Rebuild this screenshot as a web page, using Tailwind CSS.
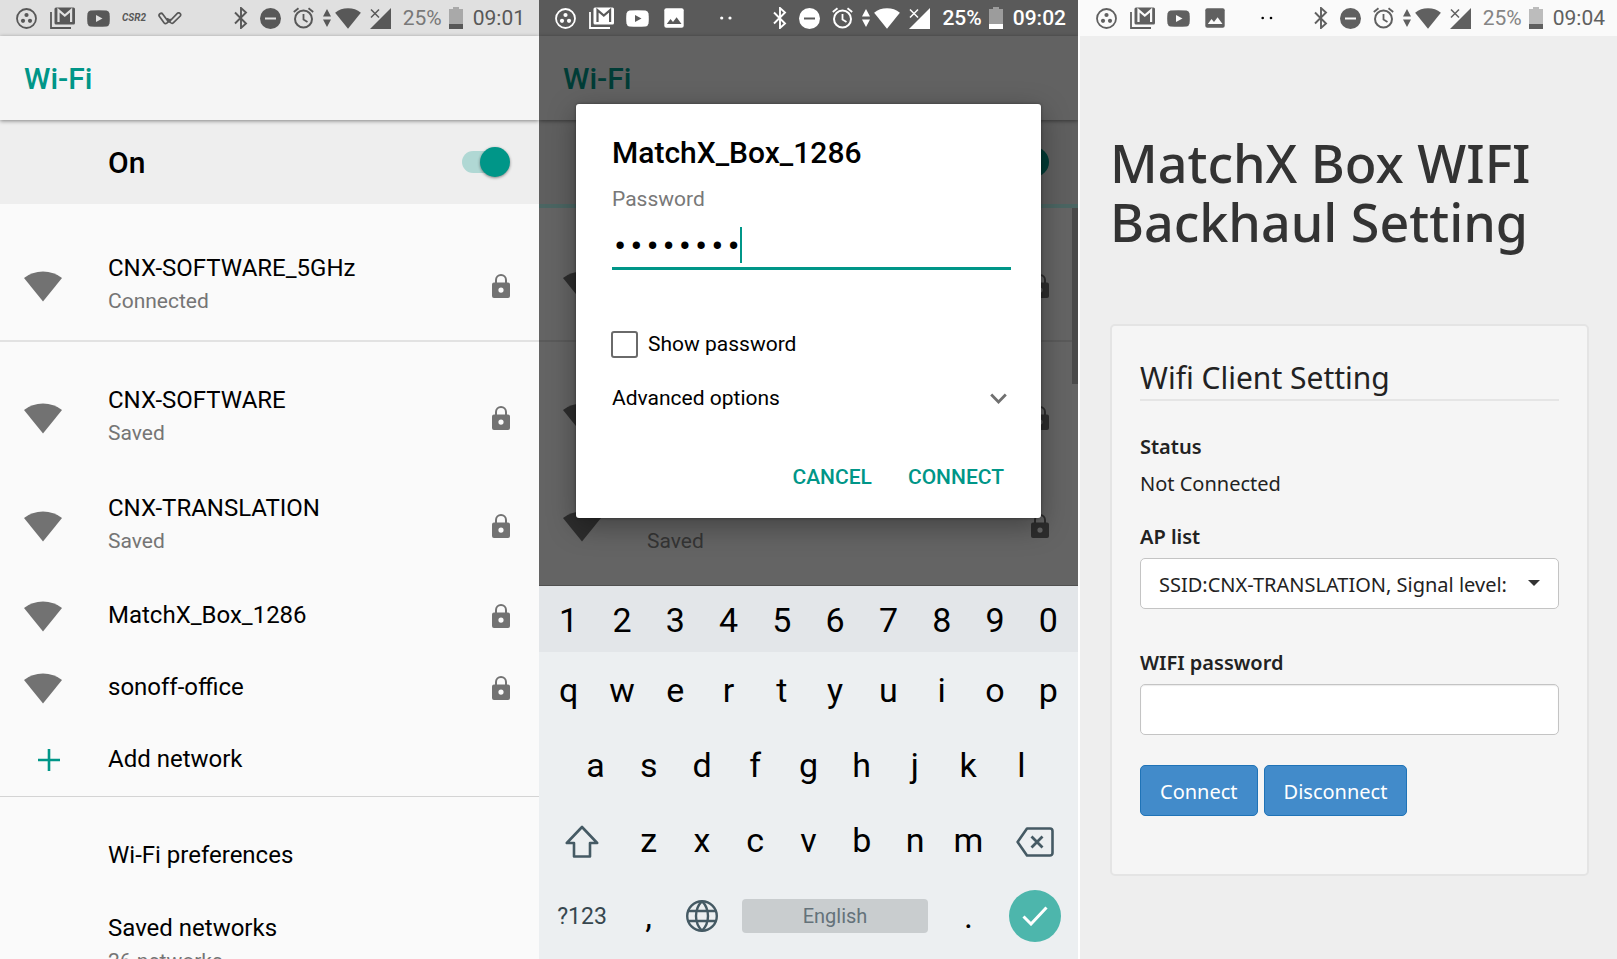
<!DOCTYPE html>
<html lang="en">
<head>
<meta charset="utf-8">
<meta name="viewport" content="width=device-width, initial-scale=1">
<title>Wi-Fi setup</title>
<script src="https://cdn.jsdelivr.net/npm/@tailwindcss/browser@4"></script>
</head>
<body class="bg-white font-[Roboto,sans-serif] text-black">

<svg class="hidden" aria-hidden="true">
  <symbol id="dots3" viewBox="0 0 21 21"><circle cx="10.500" cy="10.500" r="9.500" fill="none" stroke="currentColor" stroke-width="1.800"/><circle cx="10.500" cy="7" r="2.100" fill="currentColor"/><circle cx="7" cy="12.800" r="2.100" fill="currentColor"/><circle cx="14" cy="12.800" r="2.100" fill="currentColor"/></symbol>
  <symbol id="mail" viewBox="0 0 25 22"><path d="M1 5v16h20" fill="none" stroke="currentColor" stroke-width="1.800"/><rect x="4.500" y="0.500" width="20.500" height="17" rx="1.500" fill="currentColor"/><path d="M8.500 15V3.200l6.300 5.300 6.300-5.300V15" fill="none" stroke="var(--bar)" stroke-width="2.200"/></symbol>
  <symbol id="video" viewBox="0 0 23 17"><path d="M3.500.6Q11.500 0 19.500.6 22 .9 22.500 3.500q.6 5 0 10-.5 2.600-3 2.900-8 .6-16 0-2.500-.3-3-2.900-.6-5 0-10Q1 .9 3.500.6z" fill="currentColor"/><path d="M9 5v7l6.500-3.500z" fill="var(--bar)"/></symbol>
  <symbol id="picture" viewBox="0 0 20 20"><rect x="0.300" y="0.300" width="19.400" height="19.400" rx="2" fill="currentColor"/><path d="M2.800 16l3.700-5 2.500 3 3.600-4.700 4.900 6.700z" fill="var(--bar)"/></symbol>
  <symbol id="ticks" viewBox="0 0 24 13"><path d="M9.500 8.500L4.800 2.200a2 2 0 0 0-3.300 2.400L6 10.800q1.300 1.500 2.800.3L12 7.500M9.800 6.800L12.500 10.500q1.500 1.500 3 .2L22.300 4a2 2 0 0 0-3-2.600L11 10" fill="none" stroke="currentColor" stroke-width="1.700" stroke-linejoin="round" stroke-linecap="round"/></symbol>
  <symbol id="bt" viewBox="0 0 14 22"><path d="M1 5.500l11 11L7 21V1l5 4.500-11 11" fill="none" stroke="currentColor" stroke-width="1.900"/></symbol>
  <symbol id="dnd" viewBox="0 0 21 21"><circle cx="10.500" cy="10.500" r="10.500" fill="currentColor"/><path d="M5 10.500h11" stroke="var(--bar)" stroke-width="2"/></symbol>
  <symbol id="alarm" viewBox="0 0 21 22"><circle cx="10.500" cy="12" r="8.500" fill="none" stroke="currentColor" stroke-width="2"/><path d="M10.500 7v5.500l4 2.500M.8 5L5.500 1.200M20.200 5l-4.700-3.800" fill="none" stroke="currentColor" stroke-width="1.800"/></symbol>
  <symbol id="updown" viewBox="0 0 8 18"><path d="M4 0l4 7.500H0zM4 18l4-7.500H0z" fill="currentColor"/></symbol>
  <symbol id="wifi" viewBox="0 0 38 31"><path d="M0 7Q8 .5 19 .5T38 7L19 30.500z" fill="currentColor"/></symbol>
  <symbol id="cell" viewBox="0 0 21 21"><path d="M21 0v21H0z" fill="currentColor"/><path d="M1 1.500l8 8M9 1.500l-8 8" stroke="currentColor" stroke-width="1.500"/></symbol>
  <symbol id="battery" viewBox="0 0 14 22"><path d="M4 0h6v2h4v20H0V2h4z" fill="currentColor" opacity=".4"/><path d="M0 17h14v5H0z" fill="currentColor"/></symbol>
  <symbol id="lock" viewBox="0 0 18 25"><path d="M4 10V6a5 5 0 0 1 10 0v4" fill="none" stroke="currentColor" stroke-width="2"/><path fill-rule="evenodd" d="M2 8.500h14a2 2 0 0 1 2 2V22a2 2 0 0 1-2 2H2a2 2 0 0 1-2-2V10.500a2 2 0 0 1 2-2zM9 13.500a2.600 2.600 0 1 0 0 5.200 2.600 2.600 0 0 0 0-5.200z" fill="currentColor"/></symbol>
</svg>

<main class="grid h-screen grid-cols-3 overflow-hidden">

  <!-- Network list -->
  <section class="flex min-w-0 flex-col overflow-hidden bg-[#fafafa]">
    <div class="flex h-9 shrink-0 items-center justify-between bg-[#e0e0e0] pr-[14px] pl-4 text-[#585858] [--bar:#e0e0e0]">
      <div class="flex items-center">
        <svg class="size-[21px]"><use href="#dots3"/></svg>
        <svg class="ml-[13px] h-[22px] w-[25px]"><use href="#mail"/></svg>
        <svg class="ml-3 h-[17px] w-[23px]"><use href="#video"/></svg>
        <span class="ml-3 text-[10px] leading-none font-bold italic">CSR2</span>
        <svg class="ml-3 h-[13px] w-6"><use href="#ticks"/></svg>
      </div>
      <div class="flex items-center text-[21px] leading-none">
        <svg class="h-[22px] w-[14px]"><use href="#bt"/></svg>
        <svg class="ml-3 size-[21px]"><use href="#dnd"/></svg>
        <svg class="ml-3 h-[22px] w-[21px]"><use href="#alarm"/></svg>
        <svg class="ml-[9px] h-[18px] w-2"><use href="#updown"/></svg>
        <svg class="ml-1 h-[21px] w-[26px]"><use href="#wifi"/></svg>
        <svg class="ml-[9px] size-[21px]"><use href="#cell"/></svg>
        <span class="ml-3 pt-px text-[#787878]">25%</span>
        <svg class="ml-[7px] h-[22px] w-[14px]"><use href="#battery"/></svg>
        <span class="ml-[10px] pt-px">09:01</span>
      </div>
    </div>
    <header class="z-10 flex h-[84px] shrink-0 items-center bg-[#f5f5f5] px-6 pt-0.5 shadow-[0_1px_4px_rgba(0,0,0,0.45)]">
      <h1 class="text-[30px] leading-9 font-medium text-[#009688]">Wi-Fi</h1>
    </header>
    <div class="flex h-[84px] shrink-0 items-center justify-between bg-[#eeeeee] pr-[29px] pl-[108px]">
      <label for="wifi-on" class="pt-0.5 text-[30px] leading-9 font-medium">On</label>
      <span class="relative block h-[30px] w-12">
        <input id="wifi-on" type="checkbox" role="switch" checked class="absolute top-1 left-0 h-[22px] w-[41px] appearance-none rounded-full bg-[#b0d8d4]">
        <span class="pointer-events-none absolute top-0 right-0 size-[30px] rounded-full bg-[#009688] shadow-[0_1px_3px_rgba(0,0,0,0.45)]"></span>
      </span>
    </div>
    <ul class="pt-7">
      <li class="flex h-[108px] items-center pr-[29px] pl-6">
        <svg class="h-[31px] w-[38px] text-[#727272]"><use href="#wifi"/></svg>
        <div class="ml-[46px] flex-1 pb-[3px]"><p class="text-[24px] leading-7">CNX-SOFTWARE_5GHz</p><p class="mt-[5px] text-[21px] leading-7 text-[#757575]">Connected</p></div>
        <svg class="h-[25px] w-[18px] text-[#727272]"><use href="#lock"/></svg>
      </li>
    </ul>
    <ul class="border-t-2 border-[#e2e2e2] pt-[22px]">
      <li class="flex h-[108px] items-center pr-[29px] pl-6">
        <svg class="h-[31px] w-[38px] text-[#727272]"><use href="#wifi"/></svg>
        <div class="ml-[46px] flex-1 pb-[3px]"><p class="text-[24px] leading-7">CNX-SOFTWARE</p><p class="mt-[5px] text-[21px] leading-7 text-[#757575]">Saved</p></div>
        <svg class="h-[25px] w-[18px] text-[#727272]"><use href="#lock"/></svg>
      </li>
      <li class="flex h-[108px] items-center pr-[29px] pl-6">
        <svg class="h-[31px] w-[38px] text-[#727272]"><use href="#wifi"/></svg>
        <div class="ml-[46px] flex-1 pb-[3px]"><p class="text-[24px] leading-7">CNX-TRANSLATION</p><p class="mt-[5px] text-[21px] leading-7 text-[#757575]">Saved</p></div>
        <svg class="h-[25px] w-[18px] text-[#727272]"><use href="#lock"/></svg>
      </li>
      <li class="flex h-[72px] items-center pr-[29px] pl-6">
        <svg class="h-[31px] w-[38px] text-[#727272]"><use href="#wifi"/></svg>
        <p class="ml-[46px] flex-1 pb-0.5 text-[24px] leading-7">MatchX_Box_1286</p>
        <svg class="h-[25px] w-[18px] text-[#727272]"><use href="#lock"/></svg>
      </li>
      <li class="flex h-[72px] items-center pr-[29px] pl-6">
        <svg class="h-[31px] w-[38px] text-[#727272]"><use href="#wifi"/></svg>
        <p class="ml-[46px] flex-1 pb-0.5 text-[24px] leading-7">sonoff-office</p>
        <svg class="h-[25px] w-[18px] text-[#727272]"><use href="#lock"/></svg>
      </li>
      <li class="h-[72px]">
        <button type="button" class="flex h-full w-full items-center pl-[38px] text-left">
          <svg class="size-[22px]" viewBox="0 0 22 22"><path d="M11 0v22M0 11h22" stroke="#009688" stroke-width="2.600"/></svg>
          <span class="ml-12 pb-0.5 text-[24px] leading-7">Add network</span>
        </button>
      </li>
    </ul>
    <ul class="border-t border-[#d4d4d4] pt-[23px]">
      <li class="flex h-[72px] items-center pl-[108px]"><p class="pb-0.5 text-[24px] leading-7">Wi-Fi preferences</p></li>
      <li class="flex h-[108px] items-center pl-[108px]"><div class="pb-[3px]"><p class="text-[24px] leading-7">Saved networks</p><p class="mt-[5px] text-[21px] leading-7 text-[#757575]">26 networks</p></div></li>
    </ul>
  </section>

  <!-- Password dialog over the dimmed list -->
  <section class="flex min-w-0 flex-col overflow-hidden">
    <div class="relative flex min-h-0 flex-1 flex-col overflow-hidden border-b border-[#505050] bg-[#646464]">
      <div class="flex h-9 shrink-0 items-center justify-between bg-[#5a5a5a] pr-3 pl-4 text-white [--bar:#5a5a5a]">
        <div class="flex items-center">
          <svg class="size-[21px]"><use href="#dots3"/></svg>
          <svg class="ml-[13px] h-[22px] w-[25px]"><use href="#mail"/></svg>
          <svg class="ml-3 h-[17px] w-[23px]"><use href="#video"/></svg>
          <svg class="ml-[15px] size-5"><use href="#picture"/></svg>
          <svg class="ml-[36px] h-1 w-3" viewBox="0 0 12 4"><circle cx="1.700" cy="2" r="1.600" fill="currentColor"/><circle cx="10" cy="2" r="1.600" fill="currentColor"/></svg>
        </div>
        <div class="flex items-center text-[21px] leading-none font-medium">
          <svg class="h-[22px] w-[14px]"><use href="#bt"/></svg>
          <svg class="ml-3 size-[21px]"><use href="#dnd"/></svg>
          <svg class="ml-3 h-[22px] w-[21px]"><use href="#alarm"/></svg>
          <svg class="ml-[9px] h-[18px] w-2"><use href="#updown"/></svg>
          <svg class="ml-1 h-[21px] w-[26px]"><use href="#wifi"/></svg>
          <svg class="ml-[9px] size-[21px]"><use href="#cell"/></svg>
          <span class="ml-3 pt-px">25%</span>
          <svg class="ml-[7px] h-[22px] w-[14px]"><use href="#battery"/></svg>
          <span class="ml-[10px] pt-px">09:02</span>
        </div>
      </div>
      <div class="z-10 flex h-[84px] shrink-0 items-center bg-[#626262] px-6 pt-0.5 shadow-[0_1px_4px_rgba(0,0,0,0.45)]">
        <h2 class="text-[30px] leading-9 font-medium text-[#003c36]">Wi-Fi</h2>
      </div>
      <div class="flex h-[84px] shrink-0 items-center justify-end bg-[#5f5f5f] pr-[29px]">
        <span class="size-[30px] rounded-full bg-[#003c36]"></span>
      </div>
      <div class="h-1 shrink-0 bg-[#4b6562]"></div>
      <ul class="pt-6 text-[#2d2d2d]">
        <li class="flex h-[108px] items-center justify-between pr-[29px] pl-6">
          <svg class="h-[31px] w-[38px]"><use href="#wifi"/></svg>
          <svg class="h-[25px] w-[18px]"><use href="#lock"/></svg>
        </li>
      </ul>
      <ul class="border-t-2 border-[#5a5a5a] pt-[22px] text-[#2d2d2d]">
        <li class="flex h-[108px] items-center justify-between pr-[29px] pl-6">
          <svg class="h-[31px] w-[38px]"><use href="#wifi"/></svg>
          <svg class="h-[25px] w-[18px]"><use href="#lock"/></svg>
        </li>
        <li class="flex h-[108px] items-center pr-[29px] pl-6">
          <svg class="h-[31px] w-[38px]"><use href="#wifi"/></svg>
          <p class="ml-[46px] flex-1 pt-[30px] text-[21px] leading-7 text-[#353535]">Saved</p>
          <svg class="h-[25px] w-[18px]"><use href="#lock"/></svg>
        </li>
      </ul>
      <div class="absolute top-[208px] right-0 h-[176px] w-[6px] bg-[#4a4a4a]"></div>

      <form class="absolute inset-x-[37px] top-[104px] z-20 rounded-[3px] bg-white pt-[31px] pr-[30px] pb-[27px] pl-[36px] shadow-[0_8px_28px_rgba(0,0,0,0.35),0_0_3px_rgba(0,0,0,0.4)]">
        <h2 class="text-[30px] leading-9 font-medium">MatchX_Box_1286</h2>
        <label for="wifi-pass" class="mt-4 block text-[21px] leading-6 text-[#787878]">Password</label>
        <div class="relative mt-4 border-b-3 border-[#009688]">
          <input id="wifi-pass" type="password" value="matchx12" class="block h-10 w-full bg-transparent font-['Liberation_Mono',monospace] text-[27px] leading-9 outline-none">
          <span class="absolute top-0 left-[128px] h-9 w-0.5 bg-[#009688]"></span>
        </div>
        <label class="mt-[60px] flex items-center text-[21px] leading-7">
          <input type="checkbox" class="-ml-px size-[27px] appearance-none rounded-[3px] border-[2px] border-[#6a6a6a]">
          <span class="ml-[10px]">Show password</span>
        </label>
        <button type="button" class="mt-[26px] flex w-full items-center justify-between pr-1 text-[21px] leading-7">
          <span>Advanced options</span>
          <svg class="h-[11px] w-[17px]" viewBox="0 0 17 11"><path d="M1.200 1.500L8.500 9l7.300-7.500" fill="none" stroke="#707070" stroke-width="2.800"/></svg>
        </button>
        <div class="mt-[51px] flex justify-end gap-[36px] pr-[7px] text-[21px] leading-7 font-medium text-[#009688]">
          <button type="button">CANCEL</button>
          <button type="submit">CONNECT</button>
        </div>
      </form>
    </div>

    <div class="shrink-0 bg-[#eceff1] pb-[5px] text-[34px] leading-none">
      <div class="grid h-[66px] grid-cols-10 bg-[#e3e6e9] px-[3px] pt-0.5">
        <button type="button">1</button><button type="button">2</button><button type="button">3</button><button type="button">4</button><button type="button">5</button><button type="button">6</button><button type="button">7</button><button type="button">8</button><button type="button">9</button><button type="button">0</button>
      </div>
      <div class="grid h-[75px] grid-cols-10 px-[3px]">
        <button type="button">q</button><button type="button">w</button><button type="button">e</button><button type="button">r</button><button type="button">t</button><button type="button">y</button><button type="button">u</button><button type="button">i</button><button type="button">o</button><button type="button">p</button>
      </div>
      <div class="grid h-[75px] grid-cols-9 px-[30px]">
        <button type="button">a</button><button type="button">s</button><button type="button">d</button><button type="button">f</button><button type="button">g</button><button type="button">h</button><button type="button">j</button><button type="button">k</button><button type="button">l</button>
      </div>
      <div class="flex h-[76px] px-[3px]">
        <button type="button" aria-label="Shift" class="flex w-20 items-center justify-center pt-1">
          <svg class="size-[34px]" viewBox="0 0 34 34"><path d="M17 2L1.800 18H9v13.500h16V18h7.200z" fill="none" stroke="#455a64" stroke-width="2.600" stroke-linejoin="round"/></svg>
        </button>
        <div class="grid flex-1 grid-cols-7">
          <button type="button">z</button><button type="button">x</button><button type="button">c</button><button type="button">v</button><button type="button">b</button><button type="button">n</button><button type="button">m</button>
        </div>
        <button type="button" aria-label="Backspace" class="flex w-20 items-center justify-center pt-1">
          <svg class="h-[30px] w-[38px]" viewBox="0 0 38 30"><path d="M11 1.500h23a2.500 2.500 0 0 1 2.500 2.500v22a2.500 2.500 0 0 1-2.500 2.500H11L1.600 15z" fill="none" stroke="#455a64" stroke-width="2.600" stroke-linejoin="round"/><path d="M15.500 9.500l11 11M26.500 9.500l-11 11" stroke="#455a64" stroke-width="2.800"/></svg>
        </button>
      </div>
      <div class="flex h-[76px] items-center px-[3px]">
        <button type="button" class="w-20 text-[23px] text-[#37474f]">?123</button>
        <button type="button" class="w-[53px]">,</button>
        <button type="button" aria-label="Language" class="flex w-[53px] justify-center">
          <svg class="size-8" viewBox="0 0 32 32" fill="none" stroke="#455a64" stroke-width="2.400"><circle cx="16" cy="16" r="14.800"/><path d="M16 1.200c-8 8-8 21.600 0 29.600 8-8 8-21.600 0-29.600zM2.500 11h27M2.500 21h27"/></svg>
        </button>
        <button type="button" class="mx-[14px] h-[34px] flex-1 rounded-[4px] bg-[#c9cdcf] text-[20px] text-[#64727a]">English</button>
        <button type="button" class="w-[53px]">.</button>
        <span class="flex w-20 justify-center">
          <button type="button" aria-label="Done" class="flex size-[52px] items-center justify-center rounded-full bg-[#4db6ac]">
            <svg class="h-5 w-[26px]" viewBox="0 0 26 20"><path d="M1.500 10.500L9 18 24.500 1.500" fill="none" stroke="#fff" stroke-width="3"/></svg>
          </button>
        </span>
      </div>
    </div>
  </section>

  <!-- Web configuration form -->
  <section class="min-w-0 overflow-hidden border-l-2 border-white bg-[#eeeeee] font-['Noto_Sans',sans-serif]">
    <div class="flex h-9 items-center justify-between bg-[#fafafa] pr-3 pl-4 font-[Roboto,sans-serif] text-[#606060] [--bar:#fafafa]">
      <div class="flex items-center">
        <svg class="size-[21px]"><use href="#dots3"/></svg>
        <svg class="ml-[13px] h-[22px] w-[25px]"><use href="#mail"/></svg>
        <svg class="ml-3 h-[17px] w-[23px]"><use href="#video"/></svg>
        <svg class="ml-[15px] size-5"><use href="#picture"/></svg>
        <svg class="ml-[36px] h-1 w-3 text-black" viewBox="0 0 12 4"><circle cx="1.700" cy="2" r="1.300" fill="currentColor"/><circle cx="10" cy="2" r="1.300" fill="currentColor"/></svg>
      </div>
      <div class="flex items-center text-[21px] leading-none">
        <svg class="h-[22px] w-[14px]"><use href="#bt"/></svg>
        <svg class="ml-3 size-[21px]"><use href="#dnd"/></svg>
        <svg class="ml-3 h-[22px] w-[21px]"><use href="#alarm"/></svg>
        <svg class="ml-[9px] h-[18px] w-2"><use href="#updown"/></svg>
        <svg class="ml-1 h-[21px] w-[26px]"><use href="#wifi"/></svg>
        <svg class="ml-[9px] size-[21px]"><use href="#cell"/></svg>
        <span class="ml-3 pt-px text-[#848484]">25%</span>
        <svg class="ml-[7px] h-[22px] w-[14px]"><use href="#battery"/></svg>
        <span class="ml-[10px] pt-px">09:04</span>
      </div>
    </div>
    <div class="pt-[97px] pr-7 pl-[30px] text-[20px] leading-7 text-[#222222]">
      <h1 class="text-[52px] leading-[59px] font-medium text-[#333333]">MatchX Box WIFI<br>Backhaul Setting</h1>
      <form class="mt-[73px] rounded-[5px] border-2 border-[#e4e4e4] bg-[#f5f5f5] px-7 pt-[30px] pb-[58px]">
        <h2 class="border-b-2 border-[#e5e5e5] text-[30px] leading-[43px]">Wifi Client Setting</h2>
        <p class="mt-8 font-semibold">Status</p>
        <p class="mt-[9px]">Not Connected</p>
        <label for="ap-list" class="mt-[25px] block font-semibold">AP list</label>
        <div class="relative mt-[7px]">
          <select id="ap-list" class="block h-[51px] w-full appearance-none rounded-[5px] border border-[#c4c4c4] bg-white pt-0.5 pr-9 pl-[18px]">
            <option>SSID:CNX-TRANSLATION, Signal level:</option>
          </select>
          <svg class="pointer-events-none absolute top-[22px] right-[19px] h-[6px] w-3" viewBox="0 0 12 6"><path d="M0 0h12L6 6z" fill="#333"/></svg>
        </div>
        <label for="ap-pass" class="mt-10 block font-semibold">WIFI password</label>
        <input id="ap-pass" type="password" class="mt-[7px] block h-[51px] w-full rounded-[5px] border border-[#c4c4c4] bg-white px-[18px] shadow-[inset_0_1px_1px_rgba(0,0,0,0.08)]">
        <div class="mt-[30px] flex gap-[6px] text-white">
          <button type="submit" class="h-[51px] rounded-[5px] border border-[#1f73b7] bg-[#428bca] px-[19px] pt-0.5">Connect</button>
          <button type="button" class="h-[51px] rounded-[5px] border border-[#1f73b7] bg-[#428bca] px-[19px] pt-0.5">Disconnect</button>
        </div>
      </form>
    </div>
  </section>
</main>
</body>
</html>
